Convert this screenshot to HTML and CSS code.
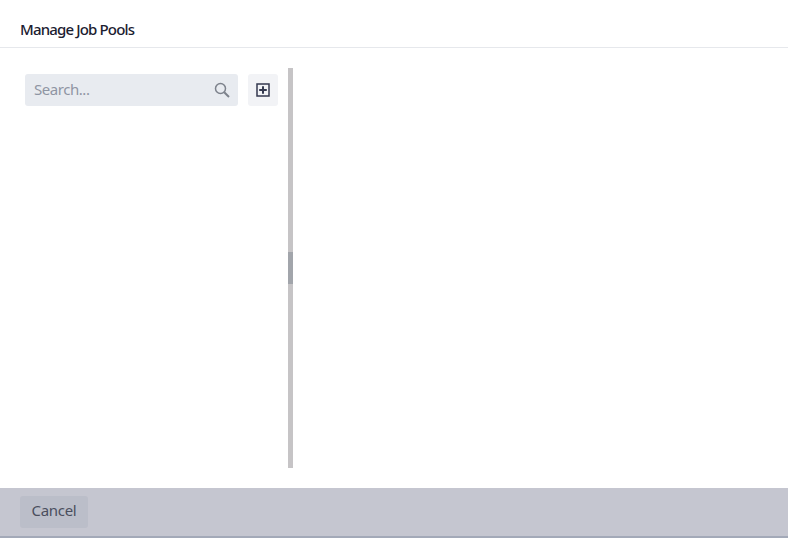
FILE: index.html
```html
<!DOCTYPE html>
<html lang="en">
<head>
<meta charset="utf-8">
<title>Manage Job Pools</title>
<link rel="stylesheet" href="styles.css">
</head>
<body>
<div class="dialog">
  <header class="header"><h1 class="title">Manage Job Pools</h1></header>
  <main class="content">
    <aside class="sidebar">
      <div class="search">
        <span class="placeholder">Search...</span>
        <svg class="search-icon" width="18" height="18" viewBox="0 0 18 18" fill="none" stroke="#7d828c" stroke-width="1.5"><circle cx="7.5" cy="7.5" r="5"/><path d="M11.2 11.2 16 16" stroke-width="2"/></svg>
      </div>
      <button class="add" type="button" aria-label="Add">
        <svg width="14" height="14" viewBox="0 0 14 14" fill="none" stroke="#34394f"><rect x="1" y="1" width="12" height="12" stroke-width="1.5"/><path d="M7 3.2v7.6M3.2 7h7.6" stroke-width="2"/></svg>
      </button>
    </aside>
    <div class="divider"><div class="handle"></div></div>
    <section class="detail"></section>
  </main>
  <footer class="footer"><button class="cancel" type="button">Cancel</button></footer>
</div>
</body>
</html>
```
FILE: styles.css
```css
* { box-sizing: border-box; }
html, body { margin: 0; height: 100%; }
body { background: #fff; font-family: "Noto Sans", sans-serif; overflow: hidden; }
.dialog { display: flex; flex-direction: column; width: 788px; height: 538px; }
.header { height: 48px; padding: 0 20px 0; display: flex; align-items: flex-start; border-bottom: 1px solid #e6e8ec; flex: none; }
.title { margin: 0; padding-top: 19px; font-size: 15px; line-height: 20px; font-weight: 500; letter-spacing: -0.85px; color: #1b2030; }
.content { flex: 1; display: flex; padding: 20px 0; min-height: 0; }
.sidebar { width: 288px; padding: 6px 10px 0 25px; display: flex; gap: 10px; align-items: flex-start; flex: none; }
.search { flex: 1; height: 32px; background: #e8ebf0; border-radius: 3px; display: flex; align-items: center; justify-content: space-between; padding: 0 7px 0 9px; }
.placeholder { font-size: 15px; line-height: 20px; letter-spacing: -0.45px; color: #8f95a3; position: relative; top: -1px; }
.add { width: 30px; height: 32px; border: 0; padding: 0; border-radius: 3px; background: #f2f3f6; display: flex; align-items: center; justify-content: center; flex: none; }
.divider { width: 5px; background: #c6c4c6; display: flex; align-items: center; flex: none; }
.handle { width: 100%; height: 32px; background: #a2a5ab; }
.detail { flex: 1; }
.footer { height: 50px; flex: none; background: #c5c6d0; border-bottom: 2px solid #a3a9b8; padding: 8px 20px 0; }
.cancel { width: 68px; height: 32px; border: 0; padding: 0 0 4px; border-radius: 3px; background: #bbbec9; color: #4a4e5e; font: 15px/20px "Noto Sans", sans-serif; letter-spacing: -0.3px; }
```
